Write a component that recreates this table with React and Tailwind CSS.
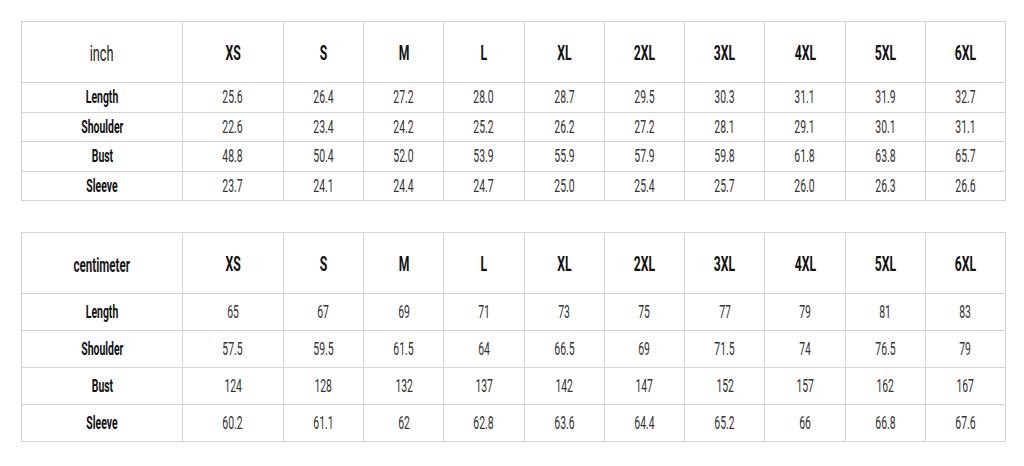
import React from "react";

const SIZES = ["XS", "S", "M", "L", "XL", "2XL", "3XL", "4XL", "5XL", "6XL"];

const INCH = [
  ["Length", ["25.6", "26.4", "27.2", "28.0", "28.7", "29.5", "30.3", "31.1", "31.9", "32.7"]],
  ["Shoulder", ["22.6", "23.4", "24.2", "25.2", "26.2", "27.2", "28.1", "29.1", "30.1", "31.1"]],
  ["Bust", ["48.8", "50.4", "52.0", "53.9", "55.9", "57.9", "59.8", "61.8", "63.8", "65.7"]],
  ["Sleeve", ["23.7", "24.1", "24.4", "24.7", "25.0", "25.4", "25.7", "26.0", "26.3", "26.6"]],
];

const CM = [
  ["Length", ["65", "67", "69", "71", "73", "75", "77", "79", "81", "83"]],
  ["Shoulder", ["57.5", "59.5", "61.5", "64", "66.5", "69", "71.5", "74", "76.5", "79"]],
  ["Bust", ["124", "128", "132", "137", "142", "147", "152", "157", "162", "167"]],
  ["Sleeve", ["60.2", "61.1", "62", "62.8", "63.6", "64.4", "65.2", "66", "66.8", "67.6"]],
];

// squeeze text to match the narrow lettering of the chart
const Narrow = ({ children }) => (
  <span className="inline-block scale-x-[0.58] whitespace-nowrap">{children}</span>
);

const SizeTable = ({ unit, unitClass, rows, rowClass }) => (
  <table className="w-[985px] table-fixed border-collapse">
    <colgroup>
      <col className="w-[161px]" />
      <col className="w-[101px]" />
    </colgroup>
    <thead>
      <tr className="h-[61px]">
        <th className={`border border-[#d4d4d4] p-0 pt-[3px] text-center ${unitClass}`}>
          <Narrow>{unit}</Narrow>
        </th>
        {SIZES.map((s) => (
          <th
            key={s}
            className="border border-[#d4d4d4] p-0 pt-[3px] text-center text-[21px] font-bold text-[#111]"
          >
            <Narrow>{s}</Narrow>
          </th>
        ))}
      </tr>
    </thead>
    <tbody>
      {rows.map(([label, values]) => (
        <tr key={label} className={rowClass}>
          <td className="border border-[#d4d4d4] p-0 text-center text-[18px] font-bold text-[#111]">
            <Narrow>{label}</Narrow>
          </td>
          {values.map((v, i) => (
            <td
              key={i}
              className="border border-[#d4d4d4] p-0 text-center text-[18px] text-[#333]"
            >
              <Narrow>{v}</Narrow>
            </td>
          ))}
        </tr>
      ))}
    </tbody>
  </table>
);

export default function App() {
  return (
    <div className="w-[1024px] h-[466px] bg-white pl-[21px] pt-[21px] font-['Roboto',sans-serif] leading-none">
      <div className="flex flex-col gap-[31px]">
        <SizeTable
          unit="inch"
          unitClass="text-[22px] font-normal text-[#222]"
          rows={INCH}
          rowClass="h-[29.5px]"
        />
        <SizeTable
          unit="centimeter"
          unitClass="text-[20px] font-bold text-[#1a1a1a]"
          rows={CM}
          rowClass="h-[37px]"
        />
      </div>
    </div>
  );
}
